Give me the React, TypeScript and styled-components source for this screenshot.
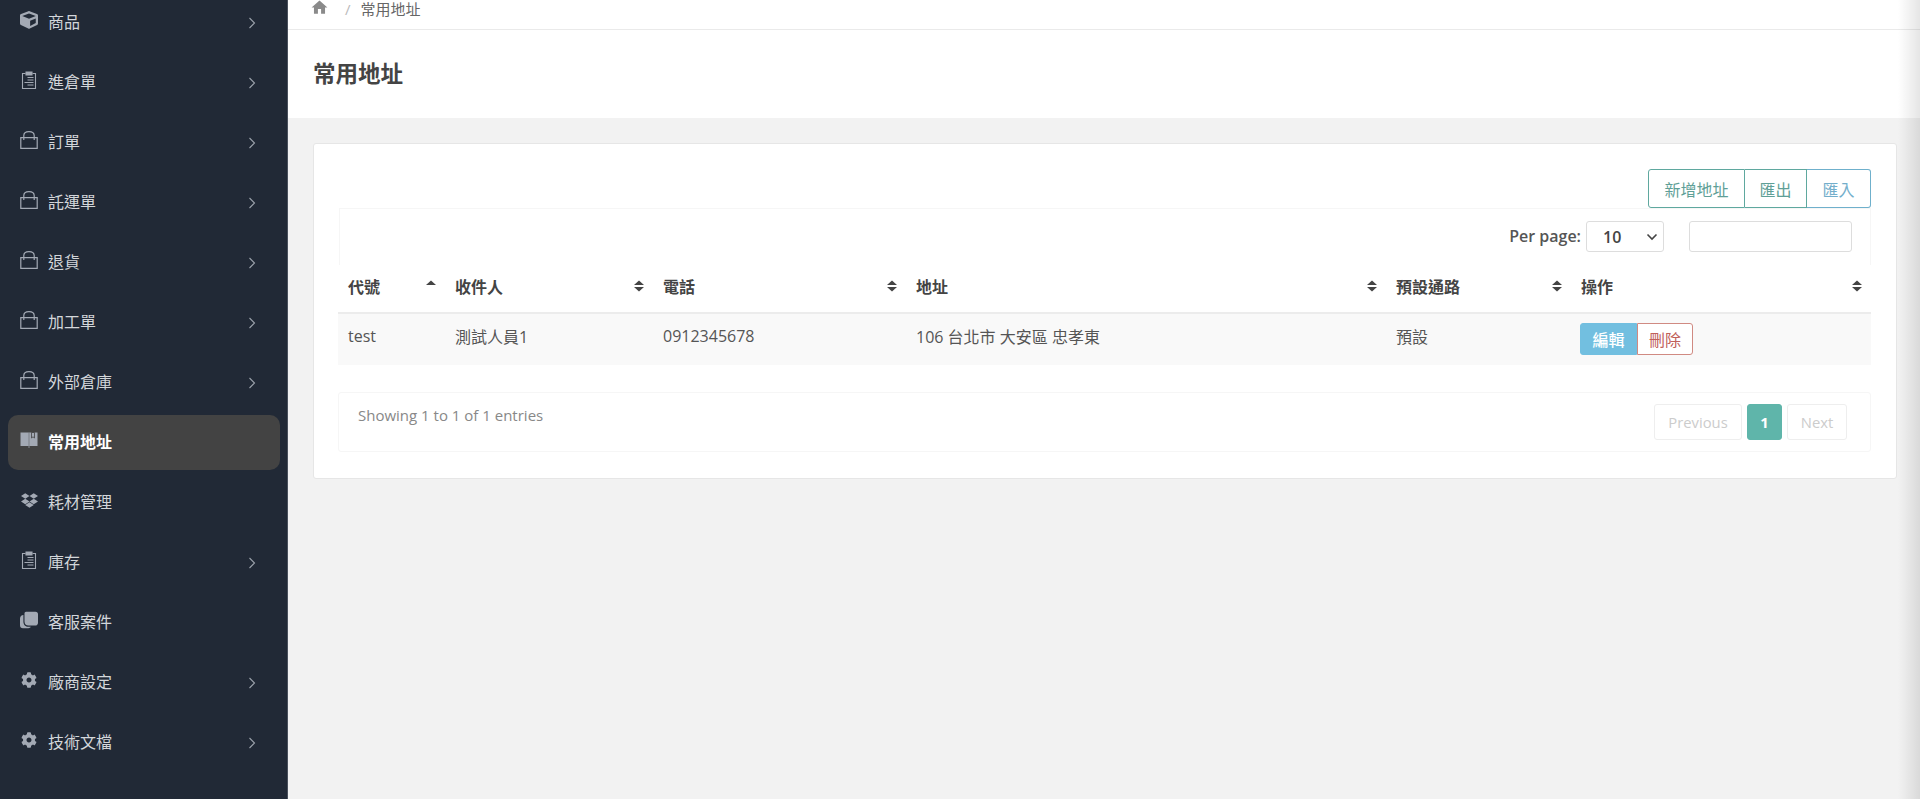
import React from "react";
import styled, { createGlobalStyle } from "styled-components";
import { FaCube, FaDropbox, FaCog } from "react-icons/fa";
import { MdHome } from "react-icons/md";

const Global = createGlobalStyle`
  html, body { margin: 0; padding: 0; height: 100%; overflow: hidden; background: #f2f2f2; }
  body { font-family: "Open Sans", "Noto Sans CJK TC", sans-serif; font-size: 16px; color: #555; }
  * { box-sizing: border-box; }
`;

const Page = styled.div`
  display: flex;
  width: 1920px;
  height: 799px;
  overflow: hidden;
  position: relative;
`;
const Sidebar = styled.aside`
  width: 288px;
  flex: none;
  background: #212936;
  border-right: 1px solid #4a515d;
  overflow: hidden;
`;
const NavList = styled.nav`
  display: flex;
  flex-direction: column;
  gap: 5px;
  margin: -5px 7px 0 8px;
`;
const NavItem = styled.a<{ $active?: boolean }>`
  display: flex;
  align-items: center;
  height: 55px;
  padding: 0 24px 0 12px;
  border-radius: 10px;
  background: ${(p) => (p.$active ? "#434343" : "transparent")};
  color: ${(p) => (p.$active ? "#fff" : "#d3d6da")};
  font-weight: ${(p) => (p.$active ? 700 : 400)};
  font-size: 16px;
`;
const NavIcon = styled.span`
  width: 18px;
  height: 18px;
  flex: none;
  margin-right: 10px;
  margin-top: -5px;
  color: #a3a9b4;
  display: flex;
  align-items: center;
  justify-content: center;
  svg { display: block; }
`;
const NavLabel = styled.span`
  flex: 1;
  padding-bottom: 3px;
`;
const Main = styled.main`
  flex: 1;
  min-width: 0;
  display: flex;
  flex-direction: column;
`;
const Breadcrumb = styled.div`
  height: 30px;
  background: #fff;
  border-bottom: 1px solid #eaeaea;
  display: flex;
  align-items: flex-start;
  padding-left: 22px;
  font-size: 15px;
  line-height: 18px;
  color: #666;
`;
const HomeIcon = styled.span`
  color: #8a8a8a;
  display: flex;
  height: 18px;
  align-items: center;
  margin-top: -2px;
`;
const Slash = styled.span`
  color: #bbb;
  margin: 0 10px 0 16px;
`;
const TitleBar = styled.header`
  height: 88px;
  background: #fff;
  display: flex;
  align-items: center;
  padding: 0 0 3px 25px;
`;
const Title = styled.h1`
  margin: 0;
  font-size: 22.5px;
  font-weight: 700;
  color: #444;
`;
const Content = styled.div`
  flex: 1;
  padding: 25px 23px 0 25px;
`;
const Card = styled.section`
  background: #fff;
  border: 1px solid #e6e6e6;
  border-radius: 3px;
  padding: 25px 25px 25px 24px;
  height: 336px;
`;
const ToolRow = styled.div`
  display: flex;
  justify-content: flex-end;
`;
const ToolButton = styled.button<{ $color: string; $text: string; $w: number }>`
  width: ${(p) => p.$w}px;
  height: 39px;
  background: #fff;
  border: 1px solid ${(p) => p.$color};
  border-left-width: 0;
  color: ${(p) => p.$text};
  font: inherit;
  font-size: 16px;
  padding: 0;
  &:first-child { border-left-width: 1px; border-radius: 3px 0 0 3px; }
  &:last-child { border-radius: 0 3px 3px 0; }
`;
const FilterBar = styled.div`
  height: 57px;
  border: 1px solid #f6f6f6;
  border-bottom: 0;
  display: flex;
  justify-content: flex-end;
  align-items: flex-start;
  padding: 12px 18px 0 0;
  margin-left: 1px;
`;
const PerLabel = styled.label`
  font-weight: 600;
  font-size: 16px;
  color: #555;
  line-height: 31px;
  margin-right: 5px;
`;
const SelectBox = styled.div`
  position: relative;
  width: 78px;
  height: 31px;
  border: 1px solid #ddd;
  border-radius: 3px;
  margin-right: 25px;
  padding-left: 16px;
  line-height: 31px;
  font-weight: 600;
  font-size: 16px;
  color: #444;
  svg { position: absolute; right: 5px; top: 9px; }
`;
const SearchBox = styled.input`
  width: 163px;
  height: 31px;
  border: 1px solid #ddd;
  border-radius: 3px;
  background: #fff;
`;
const Table = styled.table`
  width: 100%;
  border-collapse: collapse;
  table-layout: fixed;
`;
const Th = styled.th`
  height: 48px;
  padding: 0 10px 5px 10px;
  border-bottom: 2px solid #ececec;
  text-align: left;
  font-weight: 700;
  font-size: 16px;
  color: #444;
`;
const ThInner = styled.div`
  display: flex;
  justify-content: space-between;
  align-items: center;
  svg { margin-right: -2px; }
`;
const Td = styled.td`
  height: 52px;
  padding: 0 10px 7px 10px;
  background: #f9f9f9;
  font-size: 16px;
  color: #555;
`;
const ActionGroup = styled.div`
  display: flex;
  margin-top: 5px;
  margin-left: -1px;
`;
const EditButton = styled.button`
  width: 57px;
  height: 32px;
  background: #72bfe0;
  border: 1px solid #72bfe0;
  border-radius: 3px 0 0 3px;
  color: #fff;
  font: inherit;
  font-weight: 500;
  padding: 0;
`;
const DeleteButton = styled.button`
  width: 56px;
  height: 32px;
  background: #fff;
  border: 1px solid #d08a82;
  border-radius: 0 3px 3px 0;
  color: #c0605a;
  font: inherit;
  padding: 0;
`;
const FooterBar = styled.div`
  margin-top: 27px;
  height: 60px;
  border: 1px solid #f6f6f6;
  border-radius: 3px;
  display: flex;
  justify-content: space-between;
  padding: 11px 23px 0 19px;
`;
const Showing = styled.div`
  color: #888;
  font-size: 15px;
  line-height: 22px;
`;
const Pager = styled.div`
  display: flex;
  height: 36px;
`;
const PageButton = styled.span<{ $active?: boolean; $w: number; $gap: number }>`
  width: ${(p) => p.$w}px;
  height: 36px;
  margin-right: ${(p) => p.$gap}px;
  display: flex;
  align-items: center;
  justify-content: center;
  border: 1px solid ${(p) => (p.$active ? "#5fb5aa" : "#eee")};
  border-radius: 3px;
  background: ${(p) => (p.$active ? "#5fb5aa" : "#fff")};
  color: ${(p) => (p.$active ? "#fff" : "#ccc")};
  font-weight: ${(p) => (p.$active ? 700 : 400)};
  font-size: 14.8px;
`;
const EdgeShade = styled.div`
  position: absolute;
  right: 0;
  top: 0;
  bottom: 0;
  width: 22px;
  background: linear-gradient(to right, rgba(0,0,0,0), rgba(0,0,0,0.1));
  pointer-events: none;
`;

const Bag = () => (
  <svg width="18" height="18" viewBox="0 0 18 18" fill="none" stroke="currentColor" strokeWidth="1.2">
    <path d="M0.8 6.6h16.4v10.8H0.8z" />
    <path d="M3.8 9V4.6C3.8 2.2 6 0.6 9 0.6s5.2 1.6 5.2 4V9" />
  </svg>
);
const Clip = () => (
  <svg width="16" height="18" viewBox="0 0 16 18" fill="none" stroke="currentColor" strokeWidth="1.1">
    <path d="M4.5 2.5H1.5v15h13v-15h-3" />
    <path d="M5 1h6v3H5z" fill="currentColor" />
    <path d="M6.5 6.5h6M6.5 9h6M3.5 11.5h9M6.5 14h6" />
  </svg>
);
const Book = () => (
  <svg width="18" height="18" viewBox="0 0 18 18" fill="currentColor">
    <path d="M0.5 1.5h8.2v13.5H0.5zM9.3 1.5h8.2v13.5H9.3z" />
    <path d="M8.5 1.5h1v15.5h-1z" opacity=".7" />
    <path d="M11.5 1.5h3v5.5l-1.5-1.2-1.5 1.2z" fill="none" stroke="#434343" strokeWidth=".8" />
  </svg>
);
const Chat = () => (
  <svg width="18" height="18" viewBox="0 0 18 18" fill="currentColor">
    <path d="M6 0.8h9.5A2.5 2.5 0 0 1 18 3.3v8.4c0 1.6-1.2 2.9-2.8 2.9H8.5A4 4 0 0 1 4.5 10.6V2.3a1.5 1.5 0 0 1 1.5-1.5z" />
    <path d="M3.4 4v6.8c0 3 2.2 5 5 5h2.4c-.5 1.1-1.4 1.4-2.5 1.4H3A3 3 0 0 1 0 14.2V7.5C0 5.5 1.4 4.2 3.4 4z" />
  </svg>
);
const Chevron = () => (
  <svg width="8" height="12" viewBox="0 0 8 12" fill="none" stroke="#9aa0aa" strokeWidth="1.1">
    <path d="M1.5 1 L6.5 6 L1.5 11" />
  </svg>
);
const SortIcon = ({ asc }: { asc?: boolean }) => (
  <svg width="12" height="14" viewBox="0 0 12 14" fill="#444">
    <path d="M6 1.5 L11 6 H1 Z" />
    {!asc && <path d="M6 12.5 L11 8 H1 Z" />}
  </svg>
);

const items: { label: string; icon: React.ReactNode; arrow?: boolean; active?: boolean }[] = [
  { label: "商品", icon: <FaCube size={18} />, arrow: true },
  { label: "進倉單", icon: <Clip />, arrow: true },
  { label: "訂單", icon: <Bag />, arrow: true },
  { label: "託運單", icon: <Bag />, arrow: true },
  { label: "退貨", icon: <Bag />, arrow: true },
  { label: "加工單", icon: <Bag />, arrow: true },
  { label: "外部倉庫", icon: <Bag />, arrow: true },
  { label: "常用地址", icon: <Book />, active: true },
  { label: "耗材管理", icon: <FaDropbox size={17} /> },
  { label: "庫存", icon: <Clip />, arrow: true },
  { label: "客服案件", icon: <Chat /> },
  { label: "廠商設定", icon: <FaCog size={16} />, arrow: true },
  { label: "技術文檔", icon: <FaCog size={16} />, arrow: true },
];

const columns = [
  { label: "代號", width: 107, asc: true },
  { label: "收件人", width: 208 },
  { label: "電話", width: 253 },
  { label: "地址", width: 480 },
  { label: "預設通路", width: 185 },
  { label: "操作", width: 300 },
];

export default function App() {
  return (
    <Page>
      <Global />
      <Sidebar>
        <NavList>
          {items.map((it) => (
            <NavItem key={it.label} $active={it.active}>
              <NavIcon>{it.icon}</NavIcon>
              <NavLabel>{it.label}</NavLabel>
              {it.arrow && <Chevron />}
            </NavItem>
          ))}
        </NavList>
      </Sidebar>
      <Main>
        <Breadcrumb>
          <HomeIcon><MdHome size={19} /></HomeIcon>
          <Slash>/</Slash>
          <span>常用地址</span>
        </Breadcrumb>
        <TitleBar>
          <Title>常用地址</Title>
        </TitleBar>
        <Content>
          <Card>
            <ToolRow>
              <ToolButton $color="#5fa89f" $text="#5f9f97" $w={97}>新增地址</ToolButton>
              <ToolButton $color="#5fa89f" $text="#5f9f97" $w={62}>匯出</ToolButton>
              <ToolButton $color="#6fb0cc" $text="#73aecb" $w={64}>匯入</ToolButton>
            </ToolRow>
            <FilterBar>
              <PerLabel>Per page:</PerLabel>
              <SelectBox>
                10
                <svg width="12" height="12" viewBox="0 0 12 12" fill="none" stroke="#444" strokeWidth="1.6">
                  <path d="M1.5 3.5 L6 8 L10.5 3.5" />
                </svg>
              </SelectBox>
              <SearchBox />
            </FilterBar>
            <Table>
              <colgroup>
                {columns.map((c) => <col key={c.label} style={{ width: c.width }} />)}
              </colgroup>
              <thead>
                <tr>
                  {columns.map((c) => (
                    <Th key={c.label}>
                      <ThInner>
                        {c.label}
                        <SortIcon asc={c.asc} />
                      </ThInner>
                    </Th>
                  ))}
                </tr>
              </thead>
              <tbody>
                <tr>
                  <Td>test</Td>
                  <Td>測試人員1</Td>
                  <Td>0912345678</Td>
                  <Td>106 台北市 大安區 忠孝東</Td>
                  <Td>預設</Td>
                  <Td>
                    <ActionGroup>
                      <EditButton>編輯</EditButton>
                      <DeleteButton>刪除</DeleteButton>
                    </ActionGroup>
                  </Td>
                </tr>
              </tbody>
            </Table>
            <FooterBar>
              <Showing>Showing 1 to 1 of 1 entries</Showing>
              <Pager>
                <PageButton $w={88} $gap={5}>Previous</PageButton>
                <PageButton $w={35} $gap={5} $active>1</PageButton>
                <PageButton $w={60} $gap={0}>Next</PageButton>
              </Pager>
            </FooterBar>
          </Card>
        </Content>
      </Main>
      <EdgeShade />
    </Page>
  );
}
